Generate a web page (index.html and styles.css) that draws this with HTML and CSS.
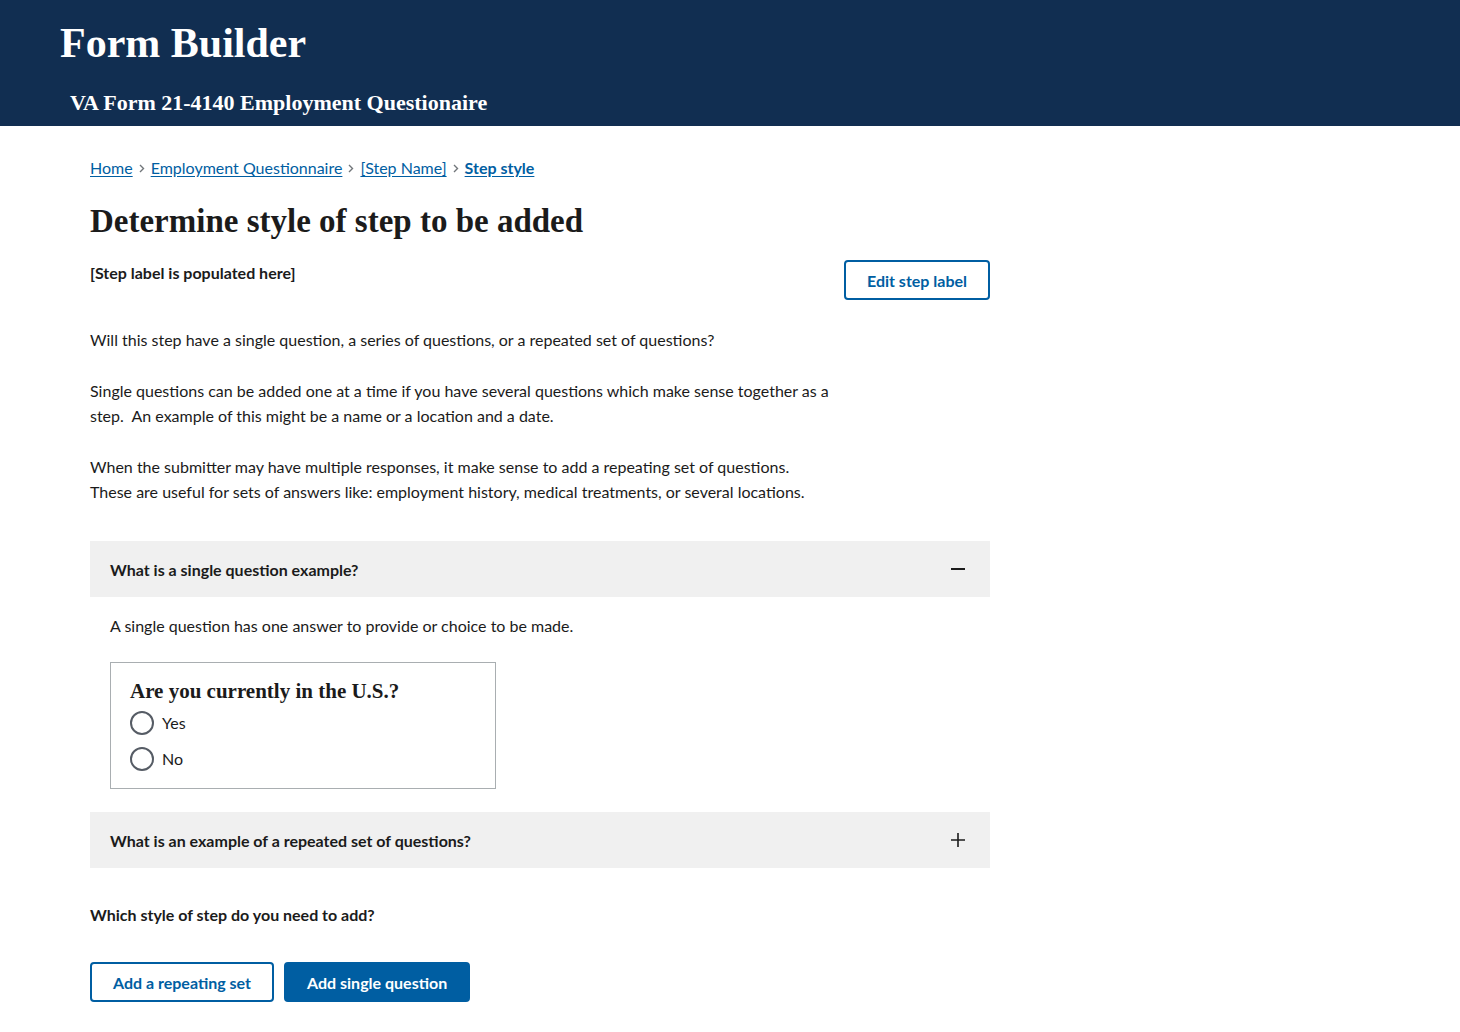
FILE: index.html
```html
<!DOCTYPE html>
<html lang="en">
<head>
<meta charset="utf-8">
<title>Form Builder</title>
<link rel="stylesheet" href="styles.css">
</head>
<body>
<header class="site-header">
  <div class="brand">Form Builder</div>
  <div class="form-title">VA Form 21-4140 Employment Questionaire</div>
</header>
<main class="content">
  <nav class="breadcrumbs">
    <a href="#">Home</a><svg class="sep" width="6" height="9" viewBox="0 0 6 9"><path d="M1 1l3.5 3.5L1 8" fill="none" stroke="#71767a" stroke-width="1.4"/></svg>
    <a href="#">Employment Questionnaire</a><svg class="sep" width="6" height="9" viewBox="0 0 6 9"><path d="M1 1l3.5 3.5L1 8" fill="none" stroke="#71767a" stroke-width="1.4"/></svg>
    <a href="#">[Step Name]</a><svg class="sep" width="6" height="9" viewBox="0 0 6 9"><path d="M1 1l3.5 3.5L1 8" fill="none" stroke="#71767a" stroke-width="1.4"/></svg>
    <a href="#" class="current">Step style</a>
  </nav>
  <h1 class="page-title">Determine style of step to be added</h1>
  <div class="label-row">
    <p class="step-label">[Step label is populated here]</p>
    <button class="btn btn-outline">Edit step label</button>
  </div>
  <p class="body-text">Will this step have a single question, a series of questions, or a repeated set of questions?</p>
  <p class="body-text">Single questions can be added one at a time if you have several questions which make sense together as a<br>step.&nbsp; An example of this might be a name or a location and a date.</p>
  <p class="body-text">When the submitter may have multiple responses, it make sense to add a repeating set of questions.<br>These are useful for sets of answers like: employment history, medical treatments, or several locations.</p>

  <section class="accordion">
    <div class="acc-head">
      <span>What is a single question example?</span>
      <svg class="acc-icon" width="16" height="16" viewBox="0 0 16 16"><path d="M1 8h14" stroke="#1b1b1b" stroke-width="2"/></svg>
    </div>
    <div class="acc-body">
      <p class="acc-text">A single question has one answer to provide or choice to be made.</p>
      <fieldset class="example">
        <legend class="example-q">Are you currently in the U.S.?</legend>
        <label class="radio"><span class="circle"></span>Yes</label>
        <label class="radio"><span class="circle"></span>No</label>
      </fieldset>
    </div>
    <div class="acc-head">
      <span>What is an example of a repeated set of questions?</span>
      <svg class="acc-icon" width="16" height="16" viewBox="0 0 16 16"><path d="M1 8h14M8 1v14" stroke="#1b1b1b" stroke-width="1.6"/></svg>
    </div>
  </section>

  <p class="question">Which style of step do you need to add?</p>
  <div class="actions">
    <button class="btn btn-outline">Add a repeating set</button>
    <button class="btn btn-solid">Add single question</button>
  </div>
</main>
</body>
</html>
```

FILE: styles.css
```css
* { box-sizing: border-box; }
html, body { margin: 0; padding: 0; }
body {
  font-family: Lato, "Noto Sans", sans-serif;
  font-size: 16px;
  color: #1b1b1b;
  background: #fff;
}
.site-header {
  background: #112e51;
  color: #fff;
  height: 126px;
  padding: 18px 0 0 60px;
  font-family: "Liberation Serif", "DejaVu Serif", serif;
  font-weight: 700;
}
.brand {
  font-size: 42px;
  line-height: 50px;
}
.form-title {
  margin: 20px 0 0 10px;
  font-size: 22px;
  line-height: 30px;
}
.content {
  width: 900px;
  margin-left: 90px;
  padding-top: 30px;
}
.breadcrumbs {
  display: flex;
  align-items: center;
  height: 24px;
  line-height: 24px;
}
.breadcrumbs a {
  color: #005ea2;
  text-decoration: underline;
  text-underline-offset: 2px;
}
.breadcrumbs a.current { font-weight: 700; }
.breadcrumbs .sep {
  margin: 0 6px;
}
.page-title {
  font-family: "Liberation Serif", "DejaVu Serif", serif;
  font-weight: 700;
  font-size: 33px;
  line-height: 40px;
  margin: 21px 0 0;
}
.label-row {
  display: flex;
  justify-content: space-between;
  align-items: flex-start;
  margin-top: 19px;
}
.step-label {
  font-weight: 700;
  margin: 2px 0 0;
  line-height: 22px;
}
.btn {
  font-family: inherit;
  font-size: 16px;
  font-weight: 700;
  height: 40px;
  padding: 0 21px;
  border-radius: 4px;
  cursor: pointer;
}
.btn-outline {
  background: #fff;
  color: #005ea2;
  border: 2px solid #005ea2;
}
.btn-solid {
  background: #005ea2;
  color: #fff;
  border: 2px solid #005ea2;
}
.body-text {
  margin: 26px 0 0;
  line-height: 25px;
}
.label-row + .body-text { margin-top: 27px; }
.accordion {
  margin-top: 37px;
}
.acc-head {
  background: #f0f0f0;
  height: 56px;
  display: flex;
  align-items: center;
  justify-content: space-between;
  padding: 0 24px 0 20px;
  font-weight: 700;
}
.acc-body {
  padding: 16px 20px 23px;
}
.acc-text {
  margin: 0;
  line-height: 25px;
}
.example {
  width: 386px;
  border: 1px solid #a9aeb1;
  margin: 24px 0 0;
  padding: 14px 19px 11px;
}
.example-q {
  float: left;
  width: 100%;
  font-family: "Liberation Serif", "DejaVu Serif", serif;
  font-weight: 700;
  font-size: 21px;
  line-height: 28px;
  padding: 0;
  margin: 0;
}
.radio {
  clear: both;
  display: flex;
  align-items: center;
  height: 36px;
  margin-top: -6px;
  line-height: 24px;
}
.radio + .radio { margin-top: 0; }
.circle {
  width: 24px;
  height: 24px;
  border: 2px solid #565c65;
  border-radius: 50%;
  margin-right: 8px;
  flex: none;
}
.question {
  font-weight: 700;
  margin: 36px 0 0;
  line-height: 22px;
}
.actions {
  display: flex;
  gap: 10px;
  margin-top: 36px;
}
```
